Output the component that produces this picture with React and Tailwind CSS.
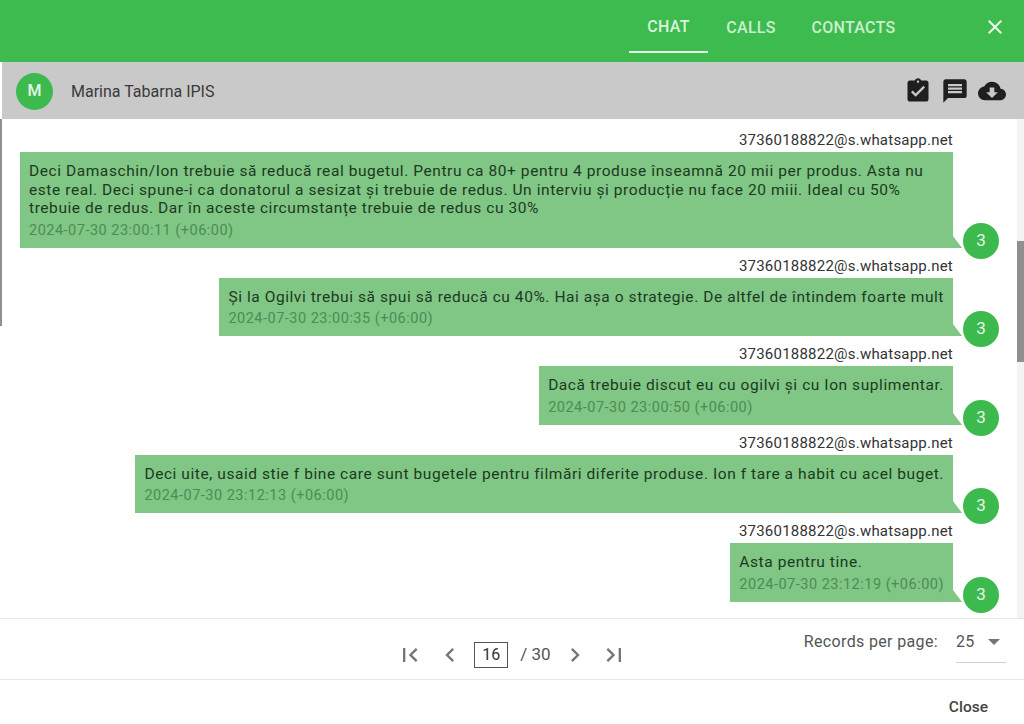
import React from 'react';

const messages = [
    {
        text: 'Deci Damaschin/Ion trebuie să reducă real bugetul. Pentru ca 80+ pentru 4 produse înseamnă 20 mii per produs. Asta nu este real. Deci spune-i ca donatorul a sesizat și trebuie de redus. Un interviu și producție nu face 20 miii. Ideal cu 50% trebuie de redus. Dar în aceste circumstanțe trebuie de redus cu 30%',
        time: '2024-07-30 23:00:11 (+06:00)',
    },
    {
        text: 'Și la Ogilvi trebui să spui să reducă cu 40%. Hai așa o strategie. De altfel de întindem foarte mult',
        time: '2024-07-30 23:00:35 (+06:00)',
    },
    {
        text: 'Dacă trebuie discut eu cu ogilvi și cu Ion suplimentar.',
        time: '2024-07-30 23:00:50 (+06:00)',
    },
    {
        text: 'Deci uite, usaid stie f bine care sunt bugetele pentru filmări diferite produse. Ion f tare a habit cu acel buget.',
        time: '2024-07-30 23:12:13 (+06:00)',
    },
    {
        text: 'Asta pentru tine.',
        time: '2024-07-30 23:12:19 (+06:00)',
    },
];

const Icon = ({ d, size = 24, className = '' }) => (
    <svg width={size} height={size} viewBox="0 0 24 24" fill="currentColor" className={className}>
        <path d={d} />
    </svg>
);

const Message = ({ text, time }) => (
    <div className="relative mb-[9px] flex flex-col items-end pr-[64px]">
        <div className="mb-[3px] h-[18px] text-[15px] leading-[18px] tracking-[0.22px] text-[#333333]">37360188822@s.whatsapp.net</div>
        <div className="relative w-fit max-w-[933px] bg-[#80c684] px-[9px] pb-[8px] pt-[10px]">
            <div className="text-[15.5px] leading-[18.5px] tracking-[0.57px] text-[#1c3a22]">{text}</div>
            <div className="mt-[4px] text-[14.5px] leading-[18px] tracking-[0.5px] text-[#4c8c56]">{time}</div>
            <svg width="9" height="12" viewBox="0 0 9 12" className="absolute bottom-0 left-full">
                <polygon points="0,0 0,12 9,12" fill="#80c684" />
            </svg>
        </div>
        <div className="absolute bottom-[-11px] right-[18px] flex h-[36px] w-[36px] items-center justify-center rounded-full bg-[#3dba4e] text-[17px] text-[#e4f6e6]">3</div>
    </div>
);

export default function App() {
    return (
        <div className="flex h-[724px] w-[1024px] flex-col overflow-hidden bg-white font-['Roboto',sans-serif]">
            <header className="flex h-[62px] shrink-0 items-start justify-end bg-[#3dbb4f]">
                <nav className="flex h-[53px] text-[16px] font-medium tracking-[0.3px]">
                    <div className="flex w-[79px] items-center justify-center border-b-2 border-[#e4f6e6] pt-[2px] text-[#d8f5dc]">CHAT</div>
                    <div className="flex w-[86px] items-center justify-center pt-[2px] text-[#c9efce]">CALLS</div>
                    <div className="flex w-[119px] items-center justify-center pt-[2px] text-[#c9efce]">CONTACTS</div>
                </nav>
                <div className="ml-[70px] mr-[17px] mt-[15px] text-[#eaf8ec]">
                    <Icon size={24} d="M19 6.41L17.59 5 12 10.59 6.41 5 5 6.41 10.59 12 5 17.59 6.41 19 12 13.41 17.59 19 19 17.59 13.41 12z" />
                </div>
            </header>

            <div className="ml-[2px] flex h-[57px] shrink-0 items-center justify-between bg-[#c9c9c9] pl-[14px] pr-[18px] pt-[1px]">
                <div className="flex items-center">
                    <div className="flex h-[37px] w-[37px] items-center justify-center rounded-full bg-[#3dba4e] text-[16px] font-medium text-[#e4f6e6]">M</div>
                    <span className="ml-[18px] pt-[1px] text-[16px] text-[#3a3a3a]">Marina Tabarna IPIS</span>
                </div>
                <div className="flex items-center gap-[9px] text-[#1f1f1f]">
                    <Icon size={28} d="M19 3h-4.18C14.4 1.84 13.3 1 12 1c-1.3 0-2.4.84-2.82 2H5c-1.1 0-2 .9-2 2v14c0 1.1.9 2 2 2h14c1.1 0 2-.9 2-2V5c0-1.1-.9-2-2-2zm-7 0c.55 0 1 .45 1 1s-.45 1-1 1-1-.45-1-1 .45-1 1-1zm-2 14l-4-4 1.41-1.41L10 14.17l6.59-6.59L18 9l-8 8z" />
                    <Icon size={28} d="M20 2H4c-1.1 0-1.99.9-1.99 2L2 22l4-4h14c1.1 0 2-.9 2-2V4c0-1.1-.9-2-2-2zm-2 12H6v-2h12v2zm0-3H6V9h12v2zm0-3H6V6h12v2z" />
                    <Icon size={28} d="M19.35 10.04C18.67 6.59 15.64 4 12 4 9.11 4 6.6 5.64 5.35 8.04 2.34 8.36 0 10.91 0 14c0 3.31 2.69 6 6 6h13c2.76 0 5-2.24 5-5 0-2.64-2.05-4.78-4.65-4.96zM17 13l-5 5-5-5h3V9h4v4h3z" />
                </div>
            </div>

            <div className="flex h-[499px] shrink-0">
                <div className="w-[2px] shrink-0">
                    <div className="h-[207px] bg-[#8f8f8f]"></div>
                </div>
                <div className="min-w-0 flex-1 overflow-hidden pt-[12px]">
                    {messages.map((m) => (
                        <Message key={m.time} text={m.text} time={m.time} />
                    ))}
                </div>
                <div className="w-[7px] shrink-0 bg-[#f3f3f3] pt-[122px]">
                    <div className="h-[121px] bg-[#8f8f8f]"></div>
                </div>
            </div>

            <div className="grid h-[62px] shrink-0 grid-cols-[1fr_auto_1fr] border-y border-[#e5e5e5]">
                <div></div>
                <div className="flex items-center pt-[12px] text-[#757575]">
                    <Icon size={28} d="M18.41 16.59L13.82 12l4.59-4.59L17 6l-6 6 6 6zM6 6h2v12H6z" />
                    <Icon size={28} className="ml-[12px]" d="M15.41 7.41L14 6l-6 6 6 6 1.41-1.41L10.83 12z" />
                    <div className="ml-[10px] flex h-[26px] w-[34px] items-center justify-center border border-[#555555] text-[16px] text-[#333333]">16</div>
                    <span className="ml-[12px] text-[17px] text-[#555555]">/ 30</span>
                    <Icon size={28} className="ml-[10px]" d="M10 6L8.59 7.41 13.17 12l-4.58 4.59L10 18l6-6z" />
                    <Icon size={28} className="ml-[11px]" d="M5.59 7.41L10.18 12l-4.59 4.59L7 18l6-6-6-6zM16 6h2v12h-2z" />
                </div>
                <div className="flex items-start justify-end pr-[18px] pt-[11px] text-[16px] tracking-[0.35px] text-[#555555]">
                    <span>Records per page:</span>
                    <div className="ml-[18px] flex h-[33px] w-[50px] items-start justify-between border-b border-[#d0d0d0]">
                        <span>25</span>
                        <div className="mr-[6px] mt-[9px] h-0 w-0 border-x-[6px] border-t-[6px] border-x-transparent border-t-[#757575]"></div>
                    </div>
                </div>
            </div>

            <div className="flex flex-1 items-start justify-end pr-[36px] pt-[16px]">
                <span className="text-[15.5px] font-medium text-[#444444]">Close</span>
            </div>
        </div>
    );
}
